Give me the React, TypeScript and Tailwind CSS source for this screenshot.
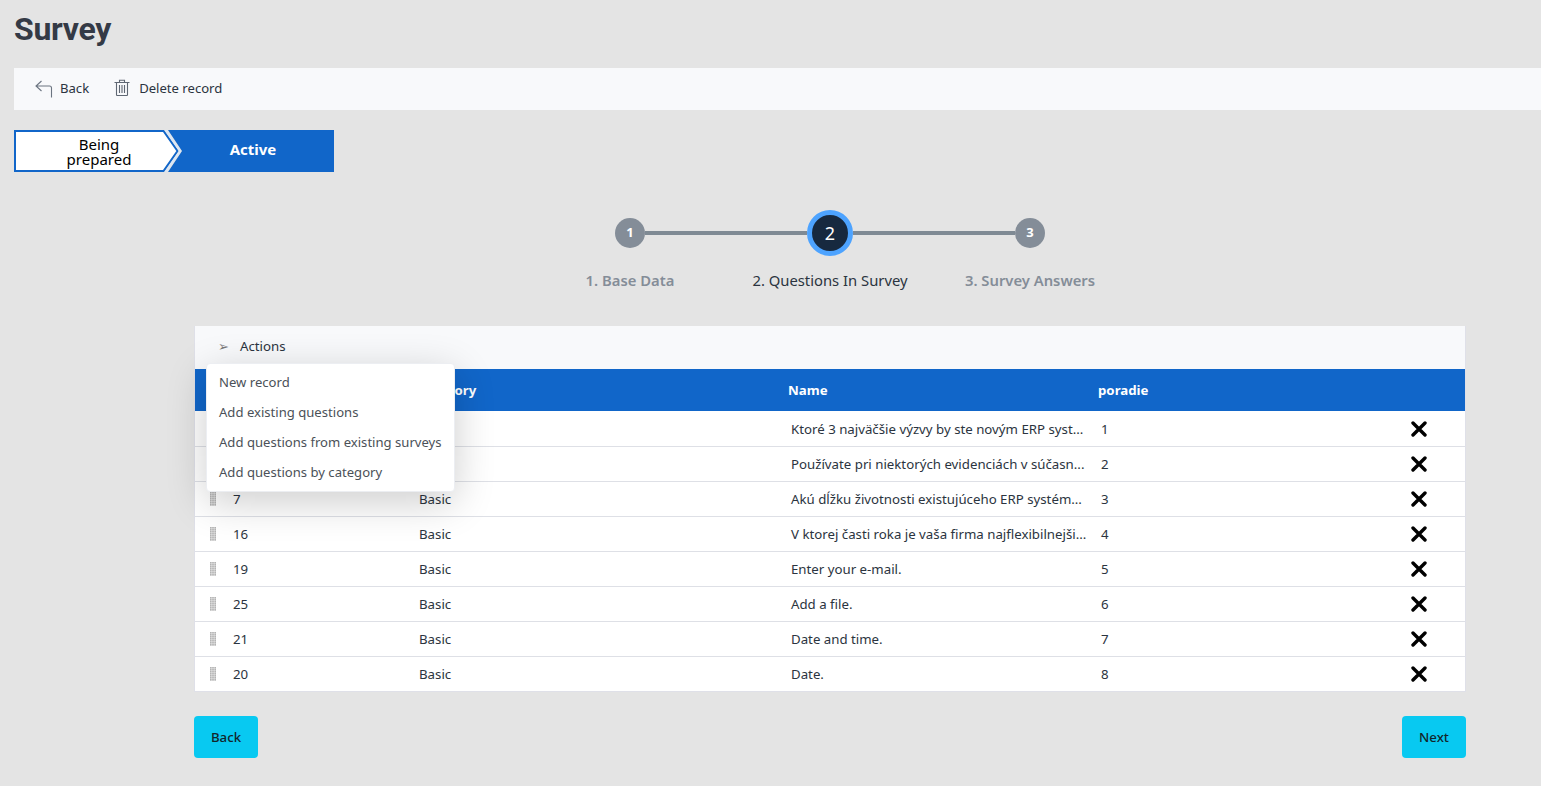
const rows = [
  { id: 3, name: "Ktoré 3 najväčšie výzvy by ste novým ERP syst...", order: 1 },
  { id: 5, name: "Používate pri niektorých evidenciách v súčasn...", order: 2 },
  { id: 7, name: "Akú dĺžku životnosti existujúceho ERP systém...", order: 3 },
  { id: 16, name: "V ktorej časti roka je vaša firma najflexibilnejši...", order: 4 },
  { id: 19, name: "Enter your e-mail.", order: 5 },
  { id: 25, name: "Add a file.", order: 6 },
  { id: 21, name: "Date and time.", order: 7 },
  { id: 20, name: "Date.", order: 8 },
];

const menuItems = [
  "New record",
  "Add existing questions",
  "Add questions from existing surveys",
  "Add questions by category",
];

function BackIcon() {
  return (
    <svg width="18" height="18" viewBox="0 0 18 18" fill="none" stroke="#6b7480" strokeWidth="1.1">
      <path d="M6.5 1L1 6l5.5 5M1 6h13.5c1.2 0 2 .8 2 2v9.5" />
    </svg>
  );
}

function TrashIcon() {
  return (
    <svg width="16" height="17" viewBox="0 0 16 17" fill="none" stroke="#5f6773" strokeWidth="1.1">
      <path d="M0.5 3.5h15M5.5 3V1.2h5V3M2.5 3.5v12.3c0 .4.3.7.7.7h9.6c.4 0 .7-.3.7-.7V3.5" />
      <path d="M5.5 6v8M8 6v8M10.5 6v8" />
    </svg>
  );
}

function DragHandle() {
  return (
    <svg className="shrink-0" width="6" height="14" viewBox="0 0 6 14" fill="#b4b4b4">
      {[0, 2, 4, 6, 8, 10, 12].map((y) => (
        <g key={y}>
          <rect x="0" y={y} width="1.7" height="1.7" />
          <rect x="2.15" y={y} width="1.7" height="1.7" />
          <rect x="4.3" y={y} width="1.7" height="1.7" />
        </g>
      ))}
    </svg>
  );
}

function RemoveIcon() {
  return (
    <svg width="16" height="16" viewBox="0 0 16 16" stroke="#000" strokeWidth="3.4" strokeLinecap="round">
      <path d="M2 2l12 12M14 2L2 14" />
    </svg>
  );
}

function StatusBar() {
  return (
    <div className="relative flex h-[42px] w-[320px] mt-5">
      <svg className="absolute left-0 top-0" width="320" height="42" viewBox="0 0 320 42">
        <path d="M154 0H320V42H154L168 21Z" fill="#1166c9" />
        <path d="M1 1H149.5L163.5 21L149.5 41H1Z" fill="#fff" stroke="#1166c9" strokeWidth="2" />
        <path d="M151 -1L166 21L151 43" fill="none" stroke="#dbe7f5" strokeWidth="2" />
      </svg>
      <div className="relative w-[170px] h-full flex items-center justify-center text-center pt-[2px] text-[15px] leading-[15px] text-black">
        Being
        <br />
        prepared
      </div>
      <div className="relative flex-1 h-full flex items-center justify-center pr-[12px] pb-[4px] text-white font-bold text-[15px]">Active</div>
    </div>
  );
}

function Stepper() {
  return (
    <div className="mt-[38px] ml-[180px] w-[1272px]">
      <div className="flex items-center justify-center h-[46px]">
        <div className="w-[30px] h-[30px] rounded-full bg-[#848d98] text-white text-[13px] font-bold flex items-center justify-center">1</div>
        <div className="w-[162px] h-1 bg-[#7f8a94]" />
        <div className="w-[46px] h-[46px] rounded-full bg-[#17293f] border-[5px] border-[#4da3ff] text-white text-[18px] flex items-center justify-center">2</div>
        <div className="w-[162px] h-1 bg-[#7f8a94]" />
        <div className="w-[30px] h-[30px] rounded-full bg-[#848d98] text-white text-[13px] font-bold flex items-center justify-center">3</div>
      </div>
      <div className="grid grid-cols-[200px_200px_200px] justify-center mt-[14px] text-[14.8px] leading-[20px] text-center">
        <div className="font-semibold text-[#848d98]">1. Base Data</div>
        <div className="text-[#2b3440]">2. Questions In Survey</div>
        <div className="font-semibold text-[#848d98]">3. Survey Answers</div>
      </div>
    </div>
  );
}

function QuestionTable() {
  return (
    <div className="relative mt-[36px] ml-[180px] w-[1272px] border-x border-b border-[#dfe0e8] bg-white text-[13.25px] text-[#2b3440]">
      <div className="h-[43px] bg-[#f8f9fb] flex items-center pl-[23px] pb-[2px]">
        <span className="text-[13px] text-[#777] w-[22px] font-['DejaVu_Sans']">➢</span>
        <span>Actions</span>
      </div>
      <div className="grid grid-cols-[224px_372px_310px_1fr] h-[42px] items-center pt-[2px] bg-[#1166c9] text-white font-bold">
        <div className="pl-[38px]">Id</div>
        <div className="-ml-[3px]">Category</div>
        <div className="-ml-[3px]">Name</div>
        <div className="-ml-[3px]">poradie</div>
      </div>
      <div className="pt-px">
        {rows.map((row) => (
          <div key={row.order} className="grid grid-cols-[224px_372px_310px_1fr] h-[35px] last:h-[34px] items-center border-b border-[#dee0e6] last:border-b-0 whitespace-nowrap">
            <div className="flex items-center pl-[15px]">
              <DragHandle />
              <span className="ml-[17px] pt-[2px]">{row.id}</span>
            </div>
            <div className="pt-[2px]">Basic</div>
            <div className="pt-[2px]">{row.name}</div>
            <div className="flex items-center justify-between pr-[38px]">
              <span className="pt-[2px]">{row.order}</span>
              <RemoveIcon />
            </div>
          </div>
        ))}
      </div>
      <div className="absolute left-[11px] top-[37px] w-[249px] h-[129px] rounded bg-white py-[4px] text-[13.1px] shadow-[0_10px_40px_rgba(0,0,0,0.2)] border border-[#eceef2]">
        {menuItems.map((item) => (
          <div key={item} className="h-[30px] flex items-center pl-[12px] text-[#4b5158] whitespace-nowrap">
            {item}
          </div>
        ))}
      </div>
    </div>
  );
}

export default function App() {
  return (
    <div className="w-[1541px] h-[786px] overflow-hidden bg-[#e4e4e4] pl-[14px] font-['Noto_Sans','Open_Sans',sans-serif]">
      <h1 className="h-[68px] pt-[8px] text-[32px] leading-[42px] font-bold text-[#343a46] font-['Roboto',sans-serif] tracking-[-0.3px]">Survey</h1>
      <div className="h-[42px] bg-[#f8f9fb] flex items-center pl-[21px] text-[13.1px] text-[#2b3440]">
        <BackIcon />
        <span className="ml-[7px] pb-px">Back</span>
        <span className="ml-[25px] flex pb-[3px]"><TrashIcon /></span>
        <span className="ml-[9px] pb-px">Delete record</span>
      </div>
      <StatusBar />
      <Stepper />
      <QuestionTable />
      <div className="ml-[180px] w-[1272px] mt-[24px] flex justify-between">
        <button className="w-16 h-[42px] pt-[2px] rounded bg-[#08c9f1] text-[13.25px] font-medium text-[#12262b]">Back</button>
        <button className="w-16 h-[42px] pt-[2px] rounded bg-[#08c9f1] text-[13.25px] font-medium text-[#12262b]">Next</button>
      </div>
    </div>
  );
}
